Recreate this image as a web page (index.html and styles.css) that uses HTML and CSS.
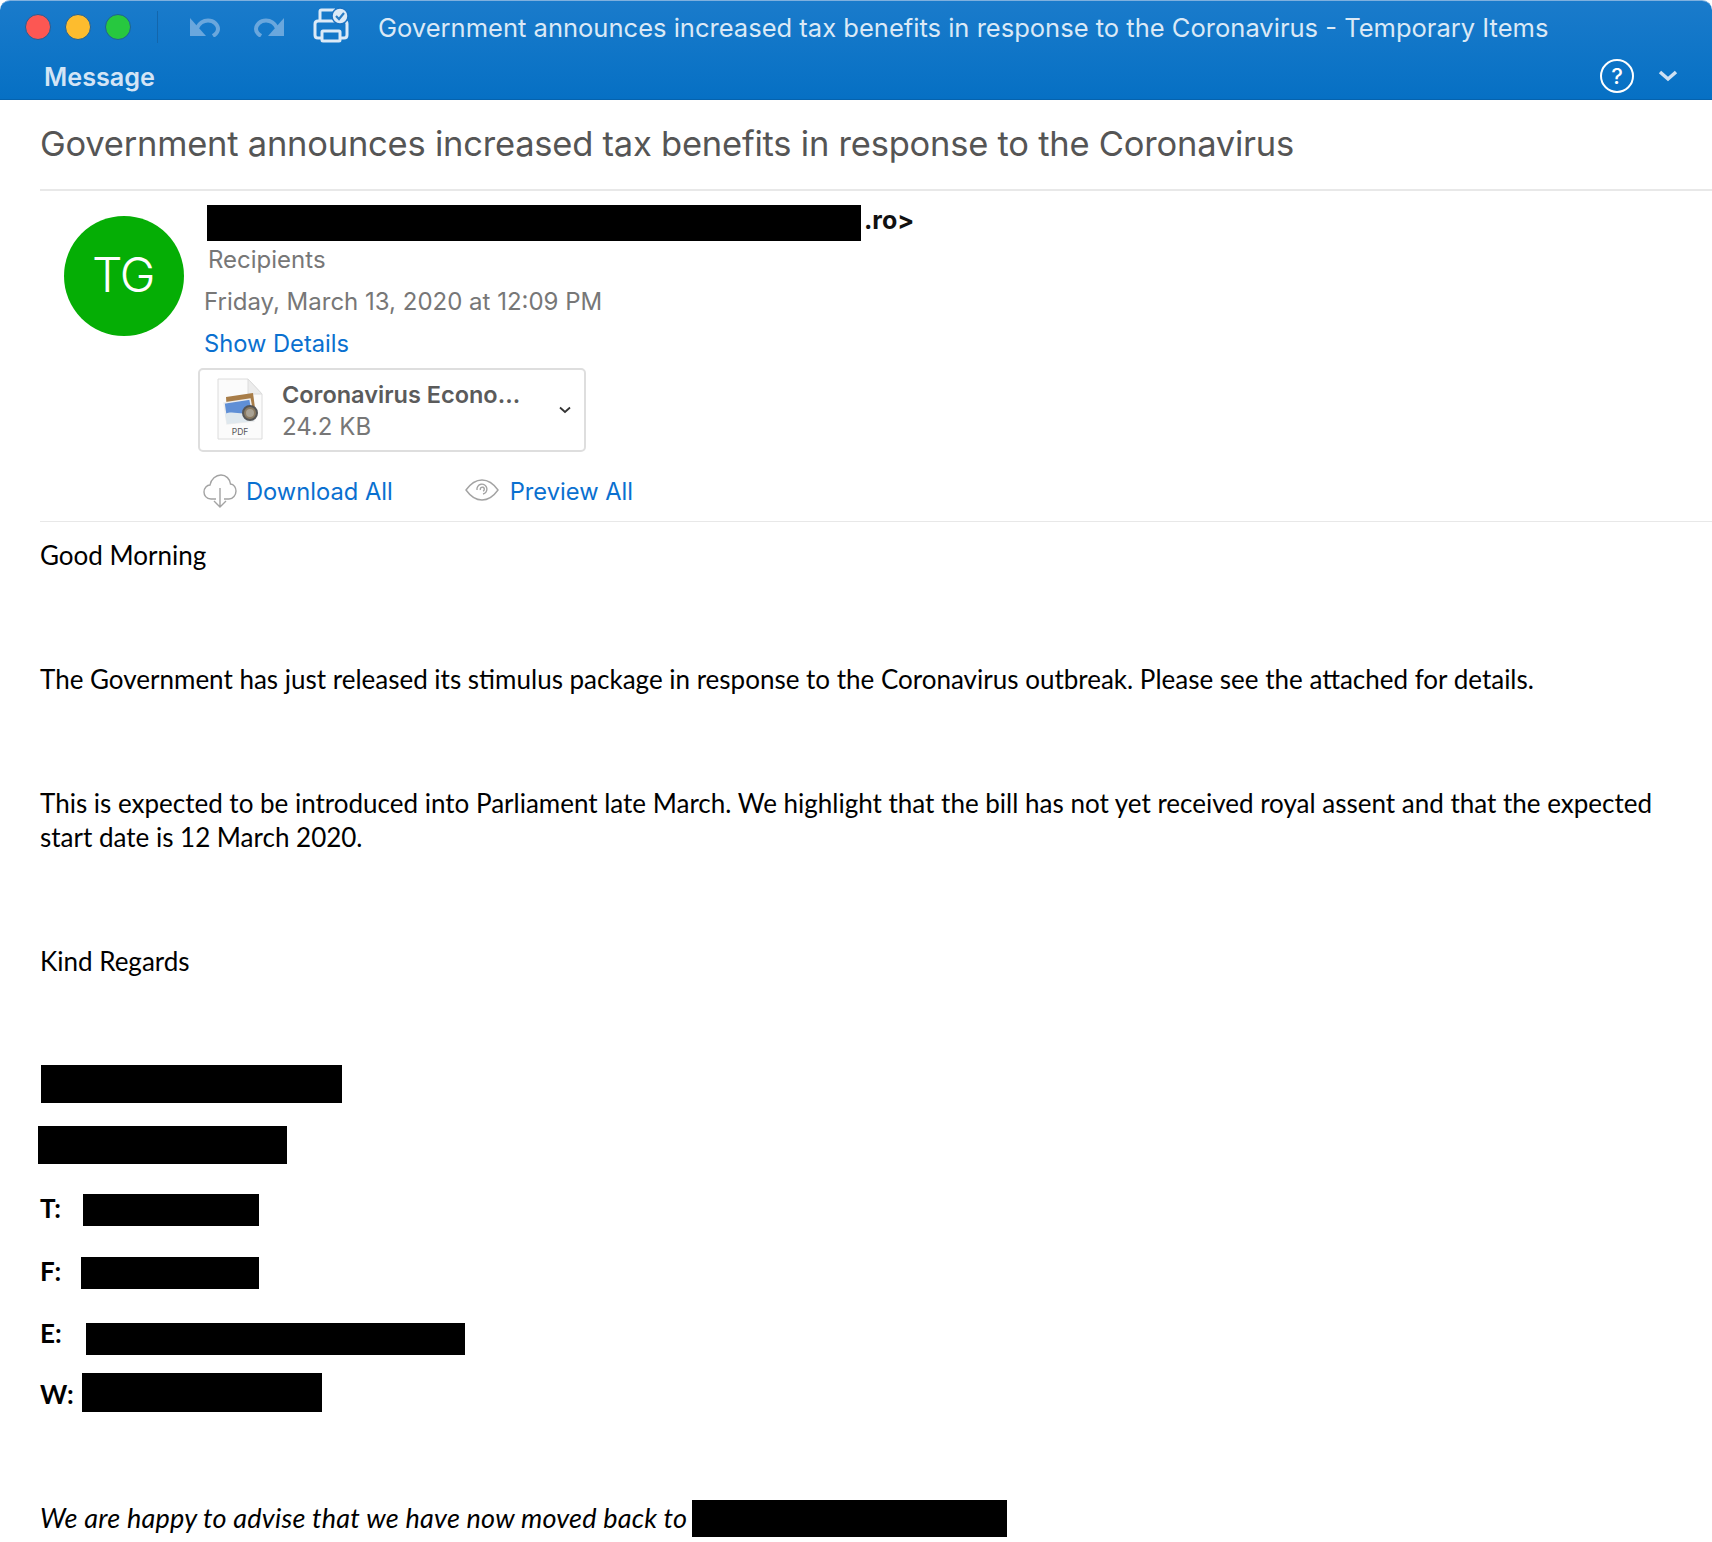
FILE: index.html
```html
<!DOCTYPE html>
<html lang="en">
<head>
<meta charset="utf-8">
<title>Government announces increased tax benefits</title>
<link rel="stylesheet" href="styles.css">
</head>
<body>
<div class="window">
  <header class="chrome">
    <div class="toolbar">
      <div class="lights">
        <span class="light red"></span>
        <span class="light yellow"></span>
        <span class="light green"></span>
      </div>
      <span class="divider"></span>
      <svg class="tool undo" viewBox="0 0 30 20"><path class="tool-fill" d="M0 1V19H16Z"/><path class="tool-line" d="M7 11C10 5 14 3.500 18 3.500C24 3.500 28 8 28 12C28 15 26 17 23 19"/></svg>
      <svg class="tool redo" viewBox="0 0 30 20"><path class="tool-fill" d="M30 1V19H14Z"/><path class="tool-line" d="M23 11C20 5 16 3.500 12 3.500C6 3.500 2 8 2 12C2 15 4 17 7 19"/></svg>
      <svg class="printer" viewBox="0 0 36 36">
        <path class="print-line" d="M7 14V4.500Q7 3 8.500 3H22M8 31H5Q2 31 2 28V17Q2 14 5 14H31Q34 14 34 17V28Q34 31 31 31H28"/>
        <rect class="print-line" x="9" y="24" width="18" height="10" rx="1"/>
        <circle class="print-badge" cx="27" cy="9" r="8"/>
        <path class="print-check" d="M23 9L26 12L31 6"/>
      </svg>
      <div class="window-title">Government announces increased tax benefits in response to the Coronavirus - Temporary Items</div>
    </div>
    <div class="ribbon">
      <span class="tab">Message</span>
      <div class="ribbon-tools">
        <span class="help">?</span>
        <svg class="ribbon-chevron" viewBox="0 0 20 12"><path d="M2 2L10 9L18 2"/></svg>
      </div>
    </div>
  </header>

  <main class="message">
    <h1 class="subject">Government announces increased tax benefits in response to the Coronavirus</h1>
    <section class="meta">
      <div class="avatar">TG</div>
      <div class="details">
        <div class="sender"><span class="redact sender-bar"></span><span class="sender-end">.ro&gt;</span></div>
        <div class="recipients">Recipients</div>
        <div class="date">Friday, March 13, 2020 at 12:09 PM</div>
        <a class="link show-details">Show Details</a>
        <div class="attachment">
          <svg class="file-icon" viewBox="0 0 46 62">
            <path class="page" d="M1 1H31L45 16V61H1Z"/>
            <path class="fold" d="M31 1V16H45Z"/>
            <path class="photo-back" d="M9 19L36 15L38 30L10 34Z"/>
            <path class="photo" d="M7 25L33 21L37 43L10 46Z"/>
            <path class="photo-land" d="M8 36C16 32 24 38 35 34L37 43L10 46Z"/>
            <circle class="lens" cx="33" cy="35" r="7"/>
            <circle class="lens-glass" cx="33" cy="35" r="4"/>
            <text class="pdf" x="23" y="57">PDF</text>
          </svg>
          <div class="file-text">
            <div class="file-name">Coronavirus Econo…</div>
            <div class="file-size">24.2 KB</div>
          </div>
          <svg class="file-chevron" viewBox="0 0 12 8"><path d="M1 1.500L6 6L11 1.500"/></svg>
        </div>
        <div class="actions">
          <svg class="cloud" viewBox="0 0 34 34">
            <path d="M13 25H8C3 25 1 21 1 18C1 14 4 11 7 11C8 5 13 1 18 1C23 1 27 5 27.500 10C31 10 33 14 33 17C33 21 30 25 26 25H21"/>
            <path d="M17 14V33M11 27L17 33L23 27"/>
          </svg>
          <a class="link download">Download All</a>
          <svg class="eye" viewBox="0 0 34 22">
            <path d="M1 11C6 4 11 1 17 1C23 1 28 4 33 11C28 18 23 21 17 21C11 21 6 18 1 11Z"/>
            <path d="M12 11A5 5 0 1 1 18 15M15.500 11A2 2 0 1 1 18 12"/>
          </svg>
          <a class="link preview">Preview All</a>
        </div>
      </div>
    </section>

    <article class="body">
      <p class="para first">Good Morning</p>
      <p class="para">The Government has just released its stimulus package in response to the Coronavirus outbreak. Please see the attached for details.</p>
      <p class="para">This is expected to be introduced into Parliament late March. We highlight that the bill has not yet received royal assent and that the expected start date is 12 March 2020.</p>
      <p class="para">Kind Regards</p>
      <div class="signature">
        <span class="redact sig-name"></span>
        <span class="redact sig-role"></span>
        <div class="contact contact-t"><b class="label">T:</b><span class="redact bar-t"></span></div>
        <div class="contact contact-f"><b class="label">F:</b><span class="redact bar-f"></span></div>
        <div class="contact contact-e"><b class="label">E:</b><span class="redact bar-e"></span></div>
        <div class="contact contact-w"><b class="label">W:</b><span class="redact bar-w"></span></div>
      </div>
      <p class="moved"><em class="moved-text">We are happy to advise that we have now moved back to</em><span class="redact bar-moved"></span></p>
    </article>
  </main>
</div>
</body>
</html>
```

FILE: styles.css
```css
* { box-sizing: border-box; }
html, body { margin: 0; padding: 0; background: #fff; }
body { width: 1712px; height: 1542px; overflow: hidden; font-family: Inter, "Liberation Sans", sans-serif; }
.window { display: flex; flex-direction: column; height: 1542px; }

.chrome {
  height: 100px;
  flex: none;
  display: flex;
  flex-direction: column;
  border-radius: 10px 10px 0 0;
  border-top: 1px solid #7fb0de;
  border-bottom: 1px solid #0562ad;
  background: linear-gradient(#1a7bcb, #0670c4);
}
.toolbar { height: 52px; display: flex; align-items: center; padding-left: 25px; flex: none; }
.lights { display: flex; gap: 14px; }
.light { width: 26px; height: 26px; border-radius: 50%; border: 1px solid #1f5f97; }
.red { background: #fc5753; }
.yellow { background: #fdbc2e; }
.green { background: #27c83f; }
.divider { width: 1px; height: 32px; background: #1366ac; margin-left: 26px; }
.tool { width: 30px; height: 20px; flex: none; }
.undo { margin-left: 32px; }
.redo { margin-left: 34px; }
.tool-fill { fill: #6aa7dd; }
.tool-line { fill: none; stroke: #6aa7dd; stroke-width: 4; }
.printer { width: 36px; height: 36px; flex: none; margin-left: 29px; margin-bottom: 4px; }
.print-line { fill: none; stroke: #dceaf7; stroke-width: 3; }
.print-badge { fill: #dceaf7; stroke: #1a72c2; stroke-width: 1.500; }
.print-check { fill: none; stroke: #2a7cc4; stroke-width: 2.200; }
.window-title { margin-left: 29px; font-size: 25.540px; color: #dbe9f6; white-space: nowrap; }

.ribbon { height: 46px; display: flex; align-items: center; padding-left: 44px; padding-right: 34px; flex: none; }
.tab { font-size: 25.200px; font-weight: 600; color: #d3e4f5; margin-top: 2px; }
.ribbon-tools { margin-left: auto; display: flex; align-items: center; gap: 24px; margin-bottom: 1px; }
.help { width: 34px; height: 34px; border: 2px solid #fff; border-radius: 50%; color: #fff; font-size: 22px; font-weight: 500; display: flex; align-items: center; justify-content: center; }
.ribbon-chevron { width: 20px; height: 12px; }
.ribbon-chevron path { fill: none; stroke: #cfe0f2; stroke-width: 3.500; }

.message { flex: 1; padding-left: 40px; color: #000; }
.subject { margin: 0; height: 91px; padding-top: 22px; font-size: 34.500px; letter-spacing: -0.220px; line-height: 44px; font-weight: 400; color: #555; white-space: nowrap; border-bottom: 2px solid #e8e8e8; }
.meta { display: flex; height: 331px; border-bottom: 1px solid #e8e8e8; }
.avatar { width: 120px; height: 120px; flex: none; margin: 25px 0 0 24px; padding: 0 2px 4px 0; border-radius: 50%; background: #05ae05; color: #fff; font-size: 48px; letter-spacing: -1.500px; display: flex; align-items: center; justify-content: center; font-weight: 300; }
.details { margin-left: 20px; display: flex; flex-direction: column; align-items: flex-start; }
.sender { display: flex; align-items: center; height: 36px; margin-top: 14px; margin-left: 3px; }
.redact { display: block; background: #000; flex: none; }
.sender-bar { width: 654px; height: 36px; }
.sender-end { font-size: 25px; font-weight: 700; margin-left: 3px; margin-bottom: 6px; color: #111; }
.recipients { margin-left: 4px; height: 38px; line-height: 38px; font-size: 24px; color: #777; }
.date { margin-top: 4px; height: 38px; line-height: 38px; font-size: 24px; color: #777; white-space: nowrap; }
.link { color: #0a70d0; font-size: 23.700px; white-space: nowrap; }
.show-details { margin-top: 4px; height: 38px; line-height: 38px; }
.attachment { width: 388px; height: 84px; margin-top: 5px; margin-left: -6px; display: flex; align-items: center; border: 2px solid #dedede; border-radius: 5px; padding-left: 17px; }
.file-icon { width: 46px; height: 62px; flex: none; margin-bottom: 3px; }
.page { fill: #fbfbfb; stroke: #dcdcdc; stroke-width: 1; }
.fold { fill: #ececec; stroke: #dcdcdc; stroke-width: 1; }
.photo-back { fill: #a87d48; }
.photo { fill: #5f8fd6; stroke: #eee; stroke-width: 1.500; }
.photo-land { fill: #dfe8ee; }
.lens { fill: #8a7a62; stroke: #555; stroke-width: 2; }
.lens-glass { fill: #a9a294; }
.pdf { font-size: 8.500px; text-anchor: middle; fill: #555; font-family: Inter, sans-serif; }
.file-text { margin-left: 19px; width: 277px; padding-top: 2px; }
.file-name { font-size: 23.500px; font-weight: 600; color: #5b5b5b; line-height: 32px; white-space: nowrap; }
.file-size { font-size: 24px; color: #777; line-height: 32px; }
.file-chevron { width: 12px; height: 8px; }
.file-chevron path { fill: none; stroke: #333; stroke-width: 1.800; }
.actions { display: flex; align-items: center; margin-top: 21px; margin-left: -1px; height: 36px; }
.cloud { width: 34px; height: 34px; flex: none; }
.cloud path, .eye path { fill: none; stroke: #a3a3a3; stroke-width: 1.400; }
.download { margin-left: 9px; }
.eye { width: 34px; height: 22px; flex: none; margin-left: 72px; margin-bottom: 2px; }
.preview { margin-left: 11px; }

.body { font-family: Lato, "Noto Sans", sans-serif; font-size: 26px; line-height: 34px; padding-right: 40px; }
.para { margin: 0 0 90px; }
.para.first { margin-top: 16px; }
.signature { display: flex; flex-direction: column; align-items: flex-start; margin-top: -3px; }
.sig-name { width: 301px; height: 38px; margin-left: 1px; }
.sig-role { width: 249px; height: 38px; margin-top: 23px; margin-left: -2px; }
.contact { display: flex; align-items: center; height: 32px; font-weight: 700; }
.label { width: 43px; flex: none; font-weight: 700; }
.contact-t { margin-top: 30px; }
.contact-f { margin-top: 31px; }
.contact-e { margin-top: 34px; }
.contact-w { margin-top: 18px; height: 39px; }
.contact-t .label, .contact-f .label { margin-bottom: 4px; }
.contact-e .label { margin-bottom: 13px; }
.contact-w .label { margin-top: 2px; }
.bar-t { width: 176px; height: 32px; }
.bar-f { width: 178px; height: 32px; margin-left: -2px; }
.bar-e { width: 379px; height: 32px; margin-left: 3px; }
.bar-w { width: 240px; height: 39px; margin-left: -1px; }
.moved { margin: 88px 0 0; display: flex; align-items: center; height: 37px; white-space: nowrap; }
.moved-text { font-size: 27px; letter-spacing: 0.220px; margin-bottom: 2px; }
.bar-moved { width: 315px; height: 37px; margin-left: 5px; }
```
